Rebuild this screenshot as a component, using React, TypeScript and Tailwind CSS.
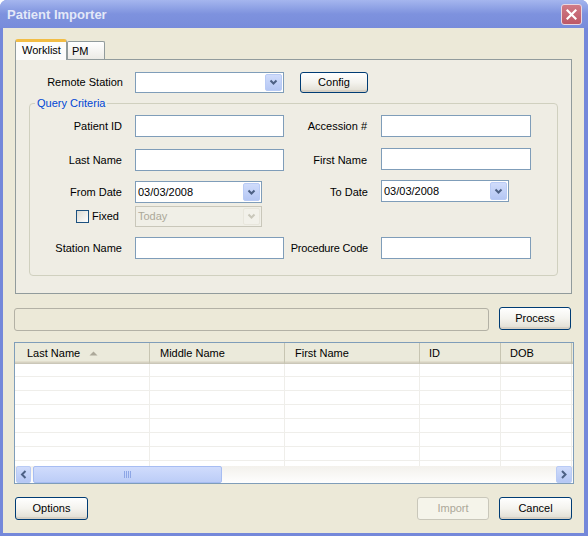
import React from 'react';

const Chevron = ({ dir = 'down', color = '#4d6185' }: { dir?: 'down' | 'left' | 'right'; color?: string }) => {
  const d = dir === 'down' ? 'M1.5 1.5 L4.5 4.5 L7.5 1.5' : dir === 'left' ? 'M5.5 1 L2 4.5 L5.5 8' : 'M2 1 L5.5 4.5 L2 8';
  const size = dir === 'down' ? { w: 9, h: 7 } : { w: 8, h: 9 };
  return (
    <svg width={size.w} height={size.h} viewBox={`0 0 ${size.w} ${size.h}`} className="shrink-0">
      <path d={d} stroke={color} strokeWidth="2" fill="none" />
    </svg>
  );
};

const XpButton = ({ label, className = '', disabled = false }: { label: string; className?: string; disabled?: boolean }) => (
  <div
    className={`flex items-center justify-center rounded-[3px] border ${
      disabled
        ? 'border-[#c9c7ba] bg-[#f5f4ea] text-[#aca899]'
        : 'border-[#003c74] bg-gradient-to-b from-white via-[#f4f3ee] to-[#e0ddd2] text-black shadow-[inset_0_-2px_0_#d6d0c5]'
    } ${className}`}
  >
    {label}
  </div>
);

const ComboButton = ({ disabled = false }: { disabled?: boolean }) => (
  <div
    className={`m-[1px] flex w-[17px] items-center justify-center rounded-[2px] border ${
      disabled ? 'border-[#e8e6dc] bg-[#f2f1ea]' : 'border-[#b9cbf5] bg-gradient-to-b from-[#d0dcfb] to-[#b5c7f4]'
    }`}
  >
    <Chevron color={disabled ? '#c9c7ba' : '#4d6185'} />
  </div>
);

const TextBox = ({ className = '' }: { className?: string }) => (
  <div className={`h-[22px] border border-[#7f9db9] bg-white ${className}`} />
);

const Combo = ({ value, className = '', disabled = false }: { value?: string; className?: string; disabled?: boolean }) => (
  <div
    className={`flex border ${disabled ? 'border-[#c9c7ba] bg-[#f0efe7] text-[#aca899]' : 'border-[#7f9db9] bg-white'} ${className}`}
  >
    <div className="flex flex-1 items-center pl-[2px]">{value}</div>
    <ComboButton disabled={disabled} />
  </div>
);

const FieldLabel = ({ text, w }: { text: string; w: string }) => (
  <div className={`${w} shrink-0 pr-[1px] text-right`}>{text}</div>
);

const columns = [
  { label: 'Last Name', w: 'w-[135px]', pl: 'pl-[12px]', sort: true },
  { label: 'Middle Name', w: 'w-[135px]', pl: 'pl-[10px]' },
  { label: 'First Name', w: 'w-[135px]', pl: 'pl-[10px]' },
  { label: 'ID', w: 'w-[81px]', pl: 'pl-[9px]' },
  { label: 'DOB', w: 'w-[71px]', pl: 'pl-[9px]' },
];

export default function App() {
  return (
    <div className="flex h-[536px] w-[588px] flex-col overflow-hidden rounded-t-[7px] bg-[#7488da] font-['Liberation_Sans',Arial,sans-serif] text-[11px] text-black">
      {/* title bar */}
      <div className="flex h-[28px] shrink-0 items-center justify-between bg-gradient-to-b from-[#a5b6ee] via-[#7e92de] to-[#788cdb] pl-[7px] pr-[6px]">
        <span className="mt-[1px] text-[13px] font-bold text-[#e3e8f8]">Patient Importer</span>
        <div className="flex h-[21px] w-[21px] items-center justify-center rounded-[3px] border border-[#e9d7e0] bg-gradient-to-b from-[#d07a86] to-[#bd5866]">
          <svg width="11" height="11" viewBox="0 0 11 11">
            <path d="M1.5 1.5 L9.5 9.5 M9.5 1.5 L1.5 9.5" stroke="#fff" strokeWidth="2.2" strokeLinecap="square" />
          </svg>
        </div>
      </div>

      {/* dialog body */}
      <div className="mb-[3px] ml-[3px] mr-[4px] flex flex-1 flex-col bg-[#ece9d8] pt-[11px]">
        {/* tabs */}
        <div className="ml-[12px] flex items-end">
          <div className="relative z-10 -mb-[1px] flex h-[21px] w-[52px] items-center rounded-t-[3px] border-x border-t-[3px] border-x-[#919b9c] border-t-[#f2bd45] bg-[#fcfcfb] pl-[6px] pb-[1px]">
            Worklist
          </div>
          <div className="flex h-[18px] w-[38px] items-center rounded-t-[2px] border border-b-0 border-[#919b9c] bg-gradient-to-b from-white to-[#ecebe6] pl-[4px] pt-[2px]">
            PM
          </div>
        </div>

        {/* tab page */}
        <div className="ml-[12px] flex h-[235px] w-[557px] flex-col border border-[#919b9c] bg-[#efede4]">
          <div className="mt-[11px] flex items-center">
            <FieldLabel text="Remote Station" w="w-[108px]" />
            <Combo className="ml-[11px] h-[21px] w-[149px]" />
            <XpButton label="Config" className="ml-[16px] mt-[1px] h-[21px] w-[68px]" />
          </div>

          <fieldset className="ml-[13px] mt-[3px] w-[529px] rounded-[4px] border border-[#d0d0bf] pb-[16px]">
            <legend className="ml-[5px] px-[2px] leading-[14px] text-[#0046d5]">Query Criteria</legend>

            <div className="mt-[5px] flex h-[22px] items-center">
              <FieldLabel text="Patient ID" w="w-[93px]" />
              <TextBox className="ml-[12px] w-[149px]" />
              <FieldLabel text="Accession #" w="w-[84px]" />
              <TextBox className="ml-[13px] w-[150px]" />
            </div>

            <div className="mt-[12px] flex h-[22px] items-center">
              <FieldLabel text="Last Name" w="w-[93px]" />
              <TextBox className="ml-[12px] w-[149px]" />
              <FieldLabel text="First Name" w="w-[84px]" />
              <TextBox className="ml-[13px] -mt-[3px] w-[150px]" />
            </div>

            <div className="mt-[10px] flex h-[22px] items-center">
              <FieldLabel text="From Date" w="w-[93px]" />
              <div className="ml-[12px] w-[149px]">
                <Combo value="03/03/2008" className="h-[22px] w-[127px]" />
              </div>
              <FieldLabel text="To Date" w="w-[85px]" />
              <Combo value="03/03/2008" className="-mt-[2px] ml-[12px] h-[22px] w-[128px]" />
            </div>

            <div className="mt-[3px] flex h-[21px] items-center">
              <div className="flex w-[93px] shrink-0 items-center justify-end pr-[4px]">
                <div className="h-[13px] w-[13px] border border-[#1c5180] bg-gradient-to-br from-[#dcdbd3] to-white" />
                <span className="ml-[3px]">Fixed</span>
              </div>
              <Combo value="Today" disabled className="ml-[12px] h-[21px] w-[127px]" />
            </div>

            <div className="mt-[10px] flex h-[22px] items-center">
              <FieldLabel text="Station Name" w="w-[93px]" />
              <TextBox className="ml-[12px] w-[149px]" />
              <div className="w-[85px] shrink-0 pr-[1px] text-right tracking-[-0.2px]">Procedure Code</div>
              <TextBox className="ml-[12px] w-[150px]" />
            </div>
          </fieldset>
        </div>

        {/* progress + process */}
        <div className="mt-[13px] flex items-start">
          <div className="ml-[11px] mt-[1px] h-[23px] w-[475px] rounded-[3px] border border-[#b3b1a5] bg-[#ece9d8]" />
          <XpButton label="Process" className="ml-[10px] h-[23px] w-[72px]" />
        </div>

        {/* list view */}
        <div className="ml-[11px] mt-[11px] flex h-[142px] w-[560px] flex-col border border-[#7f9db9] bg-white">
          <div className="flex h-[21px] shrink-0 bg-[#ebeadb] shadow-[inset_0_-1px_0_#cbc7b8,inset_0_-2px_0_#d6d2c2,inset_0_-3px_0_#e2decd]">
            {columns.map((c) => (
              <div key={c.label} className={`${c.w} ${c.pl} flex shrink-0 items-center border-r border-[#c7c5b2]`}>
                <span>{c.label}</span>
                {c.sort && (
                  <svg width="9" height="5" viewBox="0 0 9 5" className="ml-[9px]">
                    <path d="M0.5 4.5 L4.5 0.5 L8.5 4.5 Z" fill="#aca899" />
                  </svg>
                )}
              </div>
            ))}
          </div>

          <div className="flex-1 overflow-hidden">
            {Array.from({ length: 8 }).map((_, r) => (
              <div key={r} className={`flex ${r === 0 ? 'h-[13px]' : 'h-[14px]'} border-b border-[#efeeea]`}>
                {columns.map((c) => (
                  <div key={c.label} className={`${c.w} shrink-0 border-r border-[#efeeea]`} />
                ))}
              </div>
            ))}
          </div>

          {/* horizontal scrollbar */}
          <div className="flex h-[17px] shrink-0 bg-gradient-to-b from-[#f3f1ec] to-[#fefefe] px-[1px]">
            <div className="flex w-[15px] items-center justify-center rounded-[2px] border border-[#b9cbf5] bg-gradient-to-b from-[#d0dcfb] to-[#b5c7f4]">
              <Chevron dir="left" />
            </div>
            <div className="ml-[2px] flex w-[189px] items-center justify-center rounded-[2px] border border-[#a7bdf2] bg-gradient-to-b from-[#d0dcfc] to-[#bccdf7]">
              <div className="flex gap-[1px]">
                {[0, 1, 2, 3].map((i) => (
                  <div key={i} className="h-[7px] w-[1px] bg-[#8da6e6]" />
                ))}
              </div>
            </div>
            <div className="flex-1" />
            <div className="flex w-[16px] items-center justify-center rounded-[2px] border border-[#b9cbf5] bg-gradient-to-b from-[#d0dcfb] to-[#b5c7f4]">
              <Chevron dir="right" />
            </div>
          </div>
        </div>

        {/* bottom buttons */}
        <div className="mt-[13px] flex">
          <XpButton label="Options" className="ml-[12px] h-[23px] w-[73px]" />
          <div className="flex-1" />
          <XpButton label="Import" disabled className="h-[23px] w-[72px]" />
          <XpButton label="Cancel" className="ml-[10px] mr-[12px] h-[23px] w-[73px]" />
        </div>
      </div>
    </div>
  );
}
